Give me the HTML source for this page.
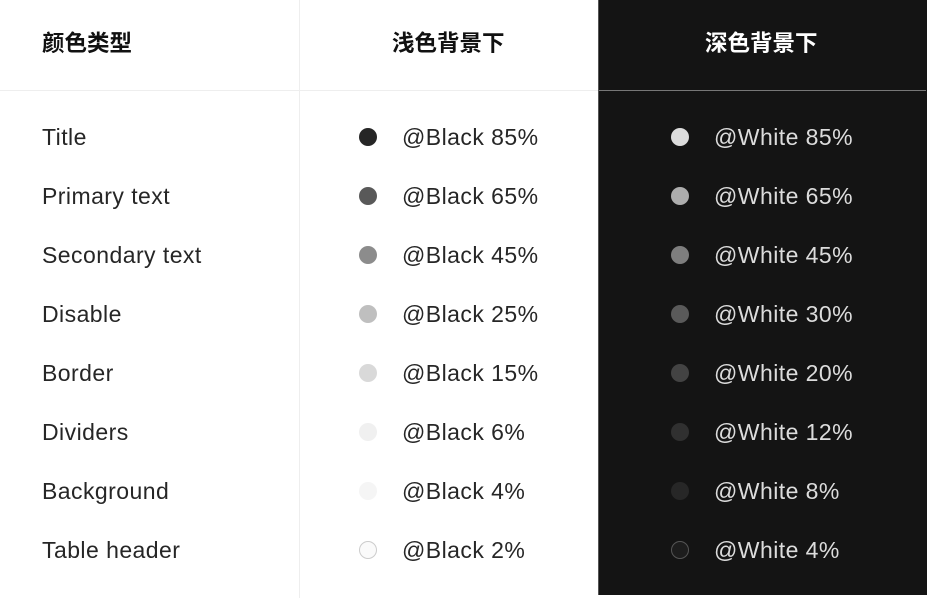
<!DOCTYPE html><html><head><meta charset="utf-8"><style>
body{margin:0;width:928px;height:598px;background:#fff;position:relative;overflow:hidden;font-family:"Liberation Sans","Noto Sans CJK SC",sans-serif}
.dark{position:absolute;left:598px;top:0;width:328px;height:595px;background:#141414;border-left:1px solid #555}
.vl{position:absolute;left:299px;top:0;width:1px;height:598px;background:#eee}
.hl{position:absolute;left:0;top:90px;width:598px;height:1px;background:#eee}
.hl2{position:absolute;left:599px;top:90px;width:327px;height:1px;background:#777}
.h{position:absolute;top:30px;font-size:22.5px;font-weight:bold;line-height:28px}
.t{position:absolute;font-size:23px;letter-spacing:0.45px;line-height:26px}
.d{position:absolute;width:18px;height:18px;border-radius:50%;box-sizing:border-box}
</style></head><body>
<div class="dark"></div><div class="vl"></div><div class="hl"></div><div class="hl2"></div>
<div class="h" style="left:42px;color:#111">颜色类型</div>
<div class="h" style="left:392px;color:#111">浅色背景下</div>
<div class="h" style="left:705px;color:#fff">深色背景下</div>
<script>
const L=["Title","Primary text","Secondary text","Disable","Border","Dividers","Background","Table header"];
const B=["85","65","45","25","15","6","4","2"],W=["85","65","45","30","20","12","8","4"];
const BC=[38,89,140,191,217,240,245,250],WC=[220,173,126,90,67,48,39,29];
let h="";
for(let i=0;i<8;i++){const y=137+59*i;
h+=`<div class="t" style="left:42px;top:${y-13}px;color:#262626">${L[i]}</div>`;
h+=`<div class="d" style="left:359px;top:${y-9}px;background:rgb(${BC[i]},${BC[i]},${BC[i]});${i==7?'border:1px solid #ccc':''}"></div>`;
h+=`<div class="t" style="left:402px;top:${y-13}px;color:#262626">@Black ${B[i]}%</div>`;
h+=`<div class="d" style="left:671px;top:${y-9}px;background:rgb(${WC[i]},${WC[i]},${WC[i]});${i==7?'border:1px solid #555':''}"></div>`;
h+=`<div class="t" style="left:714px;top:${y-13}px;color:#dcdcdc">@White ${W[i]}%</div>`;}
document.write(h);
</script>
</body></html>
